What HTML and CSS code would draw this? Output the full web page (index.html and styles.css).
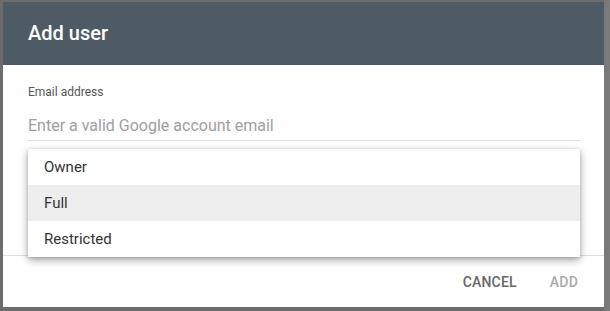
FILE: index.html
```html
<!DOCTYPE html>
<html>
<head>
<meta charset="utf-8">
<link rel="stylesheet" href="styles.css">
</head>
<body>
<div class="backdrop">
  <div class="dialog">
    <div class="dialog-header">Add user</div>
    <div class="dialog-body">
      <div class="field-label">Email address</div>
      <div class="field-input">Enter a valid Google account email</div>
      <div class="menu">
        <div class="menu-item">Owner</div>
        <div class="menu-item active">Full</div>
        <div class="menu-item">Restricted</div>
      </div>
    </div>
    <div class="dialog-actions">
      <span class="btn">CANCEL</span>
      <span class="btn disabled">ADD</span>
    </div>
  </div>
</div>
</body>
</html>
```
FILE: styles.css
```css
html, body {
  margin: 0;
  padding: 0;
  background: #6c6c6c;
  font-family: Roboto, "Liberation Sans", sans-serif;
}
.backdrop {
  width: 610px;
  height: 311px;
  padding: 2px 0 0 3px;
  box-sizing: border-box;
  position: relative;
  background: linear-gradient(to right, #6c6c6c 604px, #7a7a7a 604px);
}
.dialog {
  width: 601px;
  height: 305px;
  background: #fff;
  display: flex;
  flex-direction: column;
  position: relative;
}
.dialog-header {
  height: 63px;
  background: #4e5b64;
  color: #fff;
  font-size: 20px;
  font-weight: 500;
  padding-left: 25px;
  line-height: 63px;
  box-sizing: border-box;
}
.dialog-body {
  flex: 1;
  padding: 19px 24px 0 25px;
  position: relative;
}
.field-label {
  font-size: 12px;
  color: #555;
  line-height: 16px;
}
.field-input {
  margin-top: 16px;
  font-size: 16px;
  color: #9e9e9e;
  line-height: 20px;
  padding-bottom: 4px;
  border-bottom: 1px solid #ddd;
}
.menu {
  position: absolute;
  left: 25px;
  right: 24px;
  top: 84px;
  background: #fff;
  box-shadow: 0 3px 8px rgba(0,0,0,0.35), 0 1px 3px rgba(0,0,0,0.15);
  z-index: 2;
}
.menu-item {
  height: 36px;
  line-height: 36px;
  padding-left: 16px;
  font-size: 15px;
  color: #333;
}
.menu-item.active {
  background: #eee;
}
.dialog-actions {
  height: 52px;
  border-top: 1px solid #ddd;
  display: flex;
  justify-content: flex-end;
  align-items: center;
  gap: 33px;
  padding-right: 26px;
  box-sizing: border-box;
}
.btn {
  font-size: 14px;
  font-weight: 500;
  color: #666;
  letter-spacing: 0.2px;
}
.btn.disabled {
  color: #aaa;
}
```
